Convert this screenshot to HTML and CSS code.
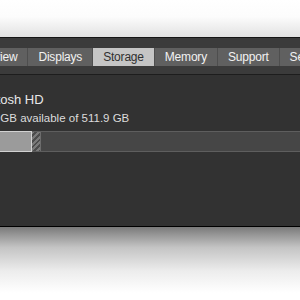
FILE: index.html
```html
<!DOCTYPE html>
<html>
<head>
<meta charset="utf-8">
<link rel="stylesheet" href="styles.css">
</head>
<body>
<div class="page">
  <div class="shadow-top"></div>
  <div class="window">
    <div class="header">
      <div class="tabs">
        <div class="tab">Overview</div>
        <div class="tab">Displays</div>
        <div class="tab active">Storage</div>
        <div class="tab">Memory</div>
        <div class="tab">Support</div>
        <div class="tab">Service</div>
      </div>
    </div>
    <div class="content">
      <div class="volume">
        <div class="vol-name">Macintosh HD</div>
        <div class="vol-info">381.52 GB available of 511.9 GB</div>
        <div class="bar">
          <div class="used"></div>
          <div class="purge"></div>
          <div class="free"></div>
        </div>
      </div>
    </div>
  </div>
  <div class="shadow-bottom"></div>
</div>
</body>
</html>
```
FILE: styles.css
```css
html, body {
  margin: 0;
  padding: 0;
  background: #ffffff;
}
.page {
  width: 300px;
  height: 300px;
  overflow: hidden;
  display: flex;
  flex-direction: column;
  font-family: "Liberation Sans", Arial, sans-serif;
}
.shadow-top {
  height: 37px;
  flex: none;
  background: linear-gradient(#ffffff, #fcfcfc 45%, #e2e2e2);
}
.window {
  flex: none;
  height: 188px;
  border-top: 1px solid #161616;
  border-bottom: 1px solid #000000;
  background: #323232;
  display: flex;
  flex-direction: column;
}
.header {
  height: 37px;
  flex: none;
  background: #3b3b3b;
  border-bottom: 1px solid #1d1d1d;
  box-sizing: border-box;
  padding-top: 10px;
}
.tabs {
  display: flex;
  height: 18px;
  margin-left: -41px;
  background: #606060;
  width: max-content;
}
.tab {
  padding: 0 10px;
  font-size: 12px;
  letter-spacing: -0.2px;
  line-height: 18px;
  color: #f2f2f2;
  border-right: 1px solid #4e4e4e;
  white-space: nowrap;
}
.tab.active {
  background: #c5c5c5;
  color: #303030;
}
.content {
  flex: 1;
  display: flex;
  flex-direction: column;
}
.volume {
  margin-left: -38px;
  padding-top: 17px;
  display: flex;
  flex-direction: column;
}
.vol-name {
  font-size: 13px;
  line-height: 16px;
  color: #e8e8e8;
}
.vol-info {
  margin-top: 3px;
  font-size: 11.5px;
  line-height: 14px;
  color: #dcdcdc;
}
.bar {
  margin-top: 6px;
  height: 21px;
  width: 400px;
  display: flex;
  box-sizing: border-box;
  border-top: 1px solid #5e5e5e;
  border-bottom: 1px solid #5e5e5e;
  background: #464646;
}
.used {
  width: 69px;
  flex: none;
  margin: -1px 0;
  background: #9b9b9b;
  border: 1px solid #d2d2d2;
  border-left: none;
}
.purge {
  width: 8px;
  flex: none;
  background: repeating-linear-gradient(135deg, #7a7a7a 0 2px, #4c4c4c 2px 4px);
  border-right: 1px solid #6c6c6c;
}
.free {
  flex: 1;
}
.shadow-bottom {
  flex: 1;
  background: linear-gradient(#7a7a7a, #c4c4c4 28%, #ececec 60%, #ffffff 90%);
}
```
